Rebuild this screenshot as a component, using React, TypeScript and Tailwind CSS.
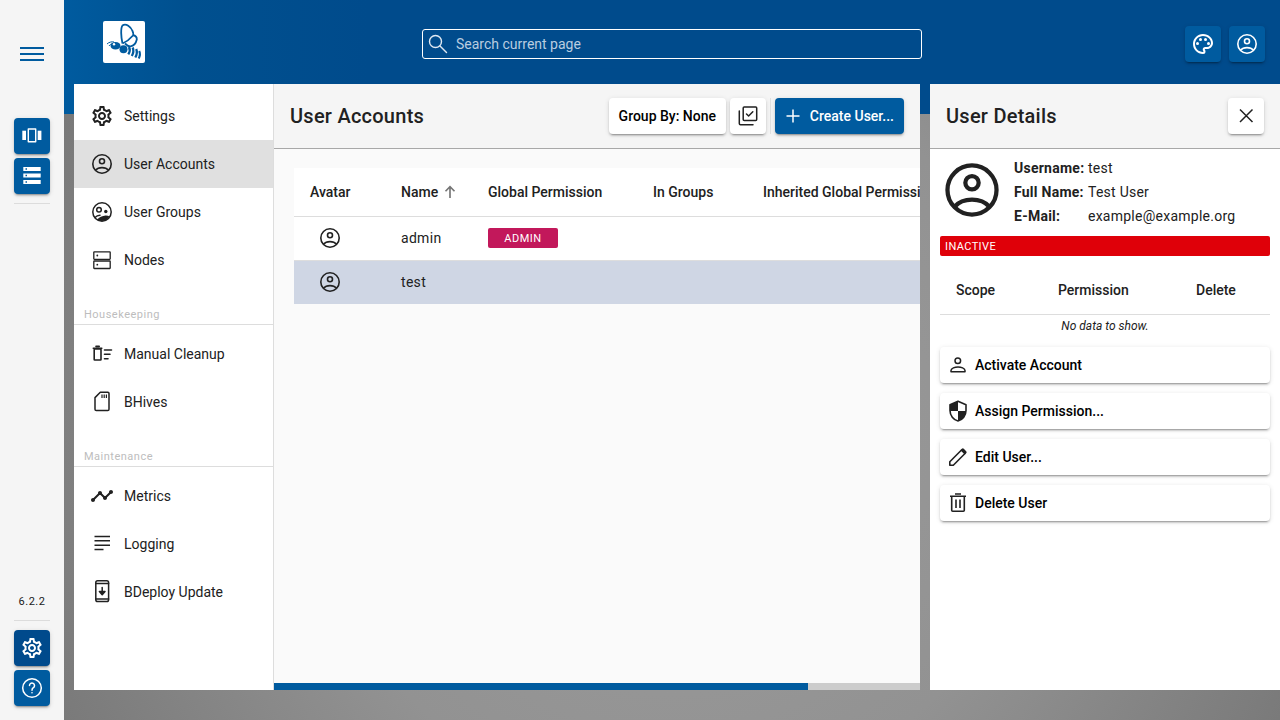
import React from "react";
import { MdOutlineSettings, MdTimeline, MdOutlinePalette } from "react-icons/md";

type IconProps = { className?: string };

function Svg({ className, children, sw = 1.4 }: IconProps & { children: React.ReactNode; sw?: number }) {
  return (
    <svg viewBox="0 0 24 24" className={className} fill="none" stroke="currentColor" strokeWidth={sw} strokeLinecap="round" strokeLinejoin="round">
      {children}
    </svg>
  );
}

const AccountIcon = ({ className }: IconProps) => (
  <Svg className={className} sw={1.6}>
    <circle cx="12" cy="12" r="9.200" />
    <circle cx="12" cy="9.300" r="2.500" />
    <path d="M5.400 18.300C7 16.500 9.500 15.600 12 15.600C14.500 15.600 17 16.500 18.600 18.300" strokeLinecap="butt" />
  </Svg>
);
const GroupIcon = ({ className }: IconProps) => (
  <Svg className={className} sw={1.5}>
    <circle cx="12" cy="12" r="9.200" />
    <circle cx="9" cy="9.800" r="2.300" />
    <circle cx="15.800" cy="11.500" r="1.700" fill="currentColor" stroke="none" />
    <path d="M5 17.500C6.500 15.800 8.500 15.200 10 15.200" />
    <path d="M7 19.800C9 17 12.500 15.800 15.500 15.500C17 15.400 18.500 15.800 19.500 16.500C18 19 15 21 12 21C10 21 8.500 20.600 7 19.800Z" fill="currentColor" stroke="none" />
  </Svg>
);
const NodesIcon = ({ className }: IconProps) => (
  <Svg className={className} sw={1.3}>
    <rect x="3.800" y="3.800" width="16.400" height="7.500" rx="0.500" />
    <rect x="3.800" y="13" width="16.400" height="7.500" rx="0.500" />
    <circle cx="7.300" cy="7.500" r="0.900" fill="currentColor" stroke="none" />
    <circle cx="7.300" cy="16.700" r="0.900" fill="currentColor" stroke="none" />
  </Svg>
);
const CleanupIcon = ({ className }: IconProps) => (
  <Svg className={className} sw={1.6}>
    <rect x="4.200" y="7" width="6.800" height="11" rx="0.500" />
    <path d="M3.300 6.300H11.800M6 4.400H9.200" />
    <path d="M14.500 8H21.500M14.500 12.300H20M14.500 16.700H18" />
  </Svg>
);
const CardIcon = ({ className }: IconProps) => (
  <Svg className={className} sw={1.5}>
    <path d="M10.300 2.300H17.800A1.300 1.300 0 0 1 19 3.600V19.300A1.300 1.300 0 0 1 17.800 20.600H6.300A1.300 1.300 0 0 1 5 19.300V7.600Z" />
    <path d="M12 4.500V8M14.200 4.500V8M16.400 4.500V8" strokeLinecap="butt" strokeWidth="1.200" />
  </Svg>
);
const LogIcon = ({ className }: IconProps) => (
  <Svg className={className} sw={1.5}>
    <path d="M4.500 4.500H20M4.500 8.800H20M4.500 13.200H20M4.500 17.500H13.500" strokeLinecap="butt" />
  </Svg>
);
const UpdateIcon = ({ className }: IconProps) => (
  <Svg className={className} sw={1.5}>
    <rect x="5.800" y="0.800" width="12.800" height="20.800" rx="1.800" />
    <path d="M5.800 3.400H18.600M5.800 19H18.600" />
    <path d="M12.200 7.500V14" />
    <path d="M9.400 11.500H15L12.200 14.800Z" fill="currentColor" />
  </Svg>
);
const CarouselIcon = ({ className }: IconProps) => (
  <Svg className={className} sw={1.4}>
    <rect x="8.300" y="5" width="7.400" height="12.700" />
    <rect x="2.300" y="6.700" width="3.700" height="9.300" fill="currentColor" stroke="none" />
    <rect x="17.700" y="6.700" width="3.700" height="9.300" fill="currentColor" stroke="none" />
  </Svg>
);
const ServersIcon = ({ className }: IconProps) => (
  <svg viewBox="0 0 24 24" className={className} fill="currentColor">
    <path fillRule="evenodd" d="M3.300 3H20.700V7H3.300ZM5.500 4.300V5.700H7V4.300Z" />
    <path fillRule="evenodd" d="M3.300 9.500H20.700V13.500H3.300ZM5.500 10.800V12.200H7V10.800Z" />
    <path fillRule="evenodd" d="M3.300 16H20.700V20H3.300ZM5.500 17.300V18.700H7V17.300Z" />
  </svg>
);
const HelpIcon = ({ className }: IconProps) => (
  <Svg className={className} sw={1.5}>
    <circle cx="12" cy="12" r="9.300" />
    <path d="M9.500 9.600A2.500 2.500 0 1 1 13.400 11.700C12.500 12.300 12 12.900 12 14.200" />
    <circle cx="12" cy="16.800" r="0.800" fill="currentColor" stroke="none" />
  </Svg>
);
const SearchIcon = ({ className }: IconProps) => (
  <Svg className={className} sw={1.4}>
    <circle cx="9.500" cy="9.500" r="6" />
    <path d="M14 14L20.500 20.500" />
  </Svg>
);
const ArrowUpIcon = ({ className }: IconProps) => (
  <Svg className={className} sw={2.200}>
    <path d="M12 20V5M6 11L12 5L18 11" strokeLinecap="butt" strokeLinejoin="miter" />
  </Svg>
);
const CloseIcon = ({ className }: IconProps) => (
  <Svg className={className} sw={1.5}>
    <path d="M6 5.500L18.500 18M18.500 5.500L6 18" strokeLinecap="butt" />
  </Svg>
);
const PlusIcon = ({ className }: IconProps) => (
  <Svg className={className} sw={1.5}>
    <path d="M12 5.500V18.500M5.500 12H18.500" strokeLinecap="butt" />
  </Svg>
);
const SelectIcon = ({ className }: IconProps) => (
  <Svg className={className} sw={1.5}>
    <rect x="7.200" y="3" width="13.500" height="13.500" rx="1" />
    <path d="M3.300 7V19.500A1.200 1.200 0 0 0 4.500 20.700H17" />
    <path d="M10.500 10L12.600 12L16.800 7.700" />
  </Svg>
);
const PersonIcon = ({ className }: IconProps) => (
  <Svg className={className} sw={1.5}>
    <circle cx="11.800" cy="7.800" r="2.800" />
    <path d="M5 18.700V17.500C5 15.300 9 14 12 14C15 14 19 15.300 19 17.500V18.700Z" />
  </Svg>
);
const ShieldIcon = ({ className }: IconProps) => (
  <Svg className={className} sw={1.6}>
    <path d="M12 2.200L4 5.700V11.500C4 16.500 7.400 21 12 22C16.600 21 20 16.500 20 11.500V5.700Z" />
    <path d="M12 2.200L4 5.700V12H12Z" fill="currentColor" stroke="none" />
    <path d="M12 12H20C19.600 16.700 16.400 21 12 22Z" fill="currentColor" stroke="none" />
  </Svg>
);
const EditIcon = ({ className }: IconProps) => (
  <Svg className={className} sw={1.6}>
    <path d="M3.800 20.200V16.700L15.500 5L19 8.500L7.300 20.200Z" />
    <path d="M15.800 3.800A1.400 1.400 0 0 1 17.800 3.800L20.200 6.200A1.400 1.400 0 0 1 20.200 8.200L18.800 9.400L14.600 5.200Z" fill="currentColor" stroke="none" />
  </Svg>
);
const TrashIcon = ({ className }: IconProps) => (
  <Svg className={className} sw={1.6}>
    <path d="M5.700 6V19.200A1 1 0 0 0 6.700 20.200H17.300A1 1 0 0 0 18.300 19.200V6" />
    <path d="M4 5.200H20M9 3H15" strokeLinecap="butt" />
    <path d="M10 8.500V17M14 8.500V17" strokeLinecap="butt" />
  </Svg>
);

const nav1 = [
  { icon: MdOutlineSettings, label: "Settings" },
  { icon: AccountIcon, label: "User Accounts", active: true },
  { icon: GroupIcon, label: "User Groups" },
  { icon: NodesIcon, label: "Nodes" },
];
const nav2 = [
  { icon: CleanupIcon, label: "Manual Cleanup" },
  { icon: CardIcon, label: "BHives" },
];
const nav3 = [
  { icon: MdTimeline, label: "Metrics" },
  { icon: LogIcon, label: "Logging" },
  { icon: UpdateIcon, label: "BDeploy Update" },
];

const elevated = "shadow-[0_3px_1px_-2px_rgba(0,0,0,0.2),0_2px_2px_0_rgba(0,0,0,0.14),0_1px_5px_0_rgba(0,0,0,0.12)]";

function NavItem({ icon: Icon, label, active }: { icon: any; label: string; active?: boolean }) {
  return (
    <div className={`flex h-12 items-center pl-4 text-sm text-[#212121] ${active ? "bg-[#e0e0e0]" : ""}`}>
      <Icon className="h-6 w-6 shrink-0" />
      <span className="ml-[10px]">{label}</span>
    </div>
  );
}

function RailButton({ icon: Icon, dark }: { icon: any; dark?: boolean }) {
  return (
    <div className={`flex h-9 w-9 items-center justify-center rounded-[4px] text-white shadow-[0_3px_1px_-2px_rgba(0,0,0,0.2),0_2px_2px_0_rgba(0,0,0,0.14),0_1px_5px_0_rgba(0,0,0,0.12)] ${dark ? "bg-[#004a8c]" : "bg-[#005b9f]"}`}>
      <Icon className="h-6 w-6" />
    </div>
  );
}

function ActionButton({ icon: Icon, label }: { icon: any; label: string }) {
  return (
    <div className="flex h-9 items-center rounded-[4px] bg-white pl-[6px] text-sm font-medium text-black shadow-[0_3px_1px_-2px_rgba(0,0,0,0.2),0_2px_2px_0_rgba(0,0,0,0.14),0_1px_5px_0_rgba(0,0,0,0.12)]">
      <Icon className="h-6 w-6 shrink-0 text-[#212121]" />
      <span className="ml-[5px]">{label}</span>
    </div>
  );
}

function Logo() {
  return (
    <div className="ml-[39px] h-[42px] w-[42px] shrink-0 rounded-[2px] bg-white">
      <svg viewBox="0 0 42 42" className="h-[42px] w-[42px]" fill="none" stroke="#005b9f">
        <path d="M19.500 22.500C18 16 17.500 7 19.500 4.500C23 1.800 28 6 29.500 10C30.500 12 30.500 13.500 30 14.500C27 18 23 21 19.500 22.500" strokeWidth="1.800" />
        <path d="M29.800 14C32 14.500 34 16 33.800 18.500C33 22 30.500 25 27.500 25.300C25.500 25.500 23.500 24 22 22.500" strokeWidth="1.800" />
        <circle cx="20.500" cy="28.300" r="4" fill="#005b9f" stroke="none" />
        <ellipse cx="12.500" cy="24.800" rx="5" ry="3.800" fill="#005b9f" stroke="none" />
        <circle cx="11" cy="23.300" r="1.200" fill="#fff" stroke="none" />
        <path d="M4 23C6 21 9 20.500 11 21" strokeWidth="1" />
        <path d="M6 25C7 23.500 8 23 9 23" strokeWidth="1" />
        <path d="M26 26C27 28 26.800 31 25.300 33.300" strokeWidth="2.300" />
        <path d="M29.700 26.500C30.700 29 30.300 32.500 28.800 35" strokeWidth="2.300" />
        <path d="M33.200 28C34.200 30.500 33.800 34 32.300 36.500" strokeWidth="2.300" />
        <path d="M36.200 30C37.200 32 37 35 35.700 37.500" strokeWidth="2.100" />
      </svg>
    </div>
  );
}

const columns = "grid-cols-[91px_87px_165px_110px_300px]";

export default function App() {
  return (
    <div className="flex h-[720px] w-[1280px] overflow-hidden font-['Roboto',sans-serif] text-[#212121]">
      <aside className="flex w-16 shrink-0 flex-col items-center bg-[#f5f5f5] pb-[14px]">
        <div className="flex h-[108px] w-6 shrink-0 flex-col justify-center gap-1">
          <div className="h-0.5 bg-[#005b9f]" />
          <div className="h-0.5 bg-[#005b9f]" />
          <div className="h-0.5 bg-[#005b9f]" />
        </div>
        <div className="mt-[10px] flex flex-col gap-1">
          <RailButton icon={CarouselIcon} />
          <RailButton icon={ServersIcon} />
        </div>
        <div className="mt-[9px] h-px w-9 bg-[#dcdcdc]" />
        <div className="flex-1" />
        <div className="text-[11px] leading-[14px] tracking-[0.5px] text-[#212121]">6.2.2</div>
        <div className="mt-[11px] mb-[9px] h-px w-9 bg-[#dcdcdc]" />
        <div className="flex flex-col gap-1">
          <RailButton icon={MdOutlineSettings} dark />
          <RailButton icon={HelpIcon} />
        </div>
      </aside>

      <div className="flex w-[1216px] flex-col bg-[radial-gradient(circle_at_50%_60%,#9c9c9c_0%,#929292_50%,#747474_100%)]">
        <header className="flex h-[114px] shrink-0 items-start bg-[linear-gradient(90deg,#005b9f_0%,#00508f_10%,#004b8c_25%,#004b8c_100%)]">
          <div className="mt-[21px] flex w-full items-start">
            <Logo />
            <div className="mt-2 ml-[277px] flex h-[30px] w-[500px] items-center rounded-[3px] border border-white pl-[3px] text-sm text-[#b9cde0]">
              <SearchIcon className="h-6 w-6 text-[#dfe8f2]" />
              <span className="ml-[6px]">Search current page</span>
            </div>
            <div className="mt-[5px] ml-[263px] flex gap-2">
              <RailButton icon={MdOutlinePalette} />
              <RailButton icon={AccountIcon} />
            </div>
          </div>
        </header>

        <div className="-mt-[30px] ml-[10px] flex h-[606px] shrink-0">
          <nav className="flex w-[200px] shrink-0 flex-col border-r border-[#dddddd] bg-white pt-2">
            {nav1.map((n) => <NavItem key={n.label} {...n} />)}
            <div className="mt-[23px] h-[18px] border-b border-[#dddddd] pl-[10px] text-[11px] leading-[16px] tracking-[0.5px] text-[#bdbdbd]">Housekeeping</div>
            <div className="mt-[5px]">{nav2.map((n) => <NavItem key={n.label} {...n} />)}</div>
            <div className="mt-[23px] h-[18px] border-b border-[#dddddd] pl-[10px] text-[11px] leading-[16px] tracking-[0.5px] text-[#bdbdbd]">Maintenance</div>
            <div className="mt-[5px]">{nav3.map((n) => <NavItem key={n.label} {...n} />)}</div>
          </nav>

          <main className="flex w-[646px] shrink-0 flex-col bg-[#fafafa]">
            <div className="flex h-[65px] shrink-0 items-center border-b border-[#a8a8a8] bg-[#f5f5f5] pl-4">
              <h1 className="text-xl font-medium tracking-[0.25px] text-[#212121]">User Accounts</h1>
              <div className="mr-4 ml-auto flex items-center">
                <div className={`flex h-9 w-[117px] items-center justify-center rounded-[4px] bg-white text-sm font-medium text-black ${elevated}`}>Group By: None</div>
                <div className={`ml-1 flex h-9 w-9 items-center justify-center rounded-[4px] bg-white ${elevated}`}>
                  <SelectIcon className="h-6 w-6 text-[#212121]" />
                </div>
                <div className="ml-[4px] h-9 w-px bg-[#e0e0e0]" />
                <div className={`ml-1 flex h-9 items-center rounded-[4px] bg-[#005b9f] pr-[10px] pl-[6px] text-sm font-medium text-white ${elevated}`}>
                  <PlusIcon className="h-6 w-6" />
                  <span className="ml-[5px]">Create User...</span>
                </div>
              </div>
            </div>
            <div className="mt-[19px] ml-5 flex-1 overflow-hidden">
              <div className={`grid h-[49px] ${columns} items-center border-b border-[#dddddd] bg-white text-sm font-medium whitespace-nowrap`}>
                <span className="pl-4">Avatar</span>
                <span className="flex items-center pl-4">Name<ArrowUpIcon className="ml-[3px] h-[18px] w-[18px] text-[#757575]" /></span>
                <span className="pl-4">Global Permission</span>
                <span className="pl-4">In Groups</span>
                <span className="pl-4">Inherited Global Permissions</span>
              </div>
              <div className={`grid h-[44px] ${columns} items-center border-b border-[#dddddd] bg-white pb-[1px] text-sm`}>
                <span className="pl-[24px]"><AccountIcon className="h-6 w-6" /></span>
                <span className="pl-4 tracking-[0.3px]">admin</span>
                <span className="pl-4"><span className="flex h-5 w-[70px] items-center justify-center rounded-[2px] bg-[#c2185b] pt-[2px] text-[11px] tracking-[0.5px] text-white">ADMIN</span></span>
                <span />
                <span />
              </div>
              <div className={`grid h-[43px] ${columns} items-center bg-[#cfd6e4] pb-[1px] text-sm`}>
                <span className="pl-[24px]"><AccountIcon className="h-6 w-6" /></span>
                <span className="pl-4 tracking-[0.3px]">test</span>
                <span />
                <span />
                <span />
              </div>
            </div>
            <div className="flex h-[7px] shrink-0 bg-[#cccccc]">
              <div className="w-[534px] bg-[#005b9f]" />
            </div>
          </main>

          <section className="ml-[10px] flex w-[350px] shrink-0 flex-col bg-white">
            <div className="flex h-[65px] shrink-0 items-center justify-between border-b border-[#a8a8a8] bg-[#f5f5f5] px-4">
              <h2 className="text-xl font-medium tracking-[0.25px] text-[#212121]">User Details</h2>
              <div className={`flex h-9 w-9 items-center justify-center rounded-[4px] bg-white ${elevated}`}>
                <CloseIcon className="h-6 w-6 text-[#212121]" />
              </div>
            </div>
            <div className="flex h-[87px] shrink-0 items-start pl-[10px]">
              <AccountIcon className="mt-[9px] h-[64px] w-[64px] shrink-0 text-[#212121]" />
              <div className="mt-[7px] ml-[10px] grid grid-cols-[74px_1fr] text-sm leading-6 tracking-[0.25px]">
                <span className="font-bold">Username:</span><span>test</span>
                <span className="font-bold">Full Name:</span><span>Test User</span>
                <span className="font-bold">E-Mail:</span><span>example@example.org</span>
              </div>
            </div>
            <div className="mx-[10px] flex h-5 items-center rounded-[2px] bg-[#df0009] pt-[2px] pl-[5px] text-[11px] tracking-[0.4px] text-white">INACTIVE</div>
            <div className="mx-[10px] mt-[10px] grid h-[49px] grid-cols-[118px_1fr_74px] items-center border-b border-[#dddddd] text-sm font-medium">
              <span className="pl-4">Scope</span>
              <span>Permission</span>
              <span>Delete</span>
            </div>
            <div className="mx-[10px] mt-[2px] text-center text-xs leading-[18px] italic">No data to show.</div>
            <div className="mx-[10px] mt-[12px] flex flex-col gap-[10px]">
              <ActionButton icon={PersonIcon} label="Activate Account" />
              <ActionButton icon={ShieldIcon} label="Assign Permission..." />
              <ActionButton icon={EditIcon} label="Edit User..." />
              <ActionButton icon={TrashIcon} label="Delete User" />
            </div>
          </section>
        </div>
      </div>
    </div>
  );
}
